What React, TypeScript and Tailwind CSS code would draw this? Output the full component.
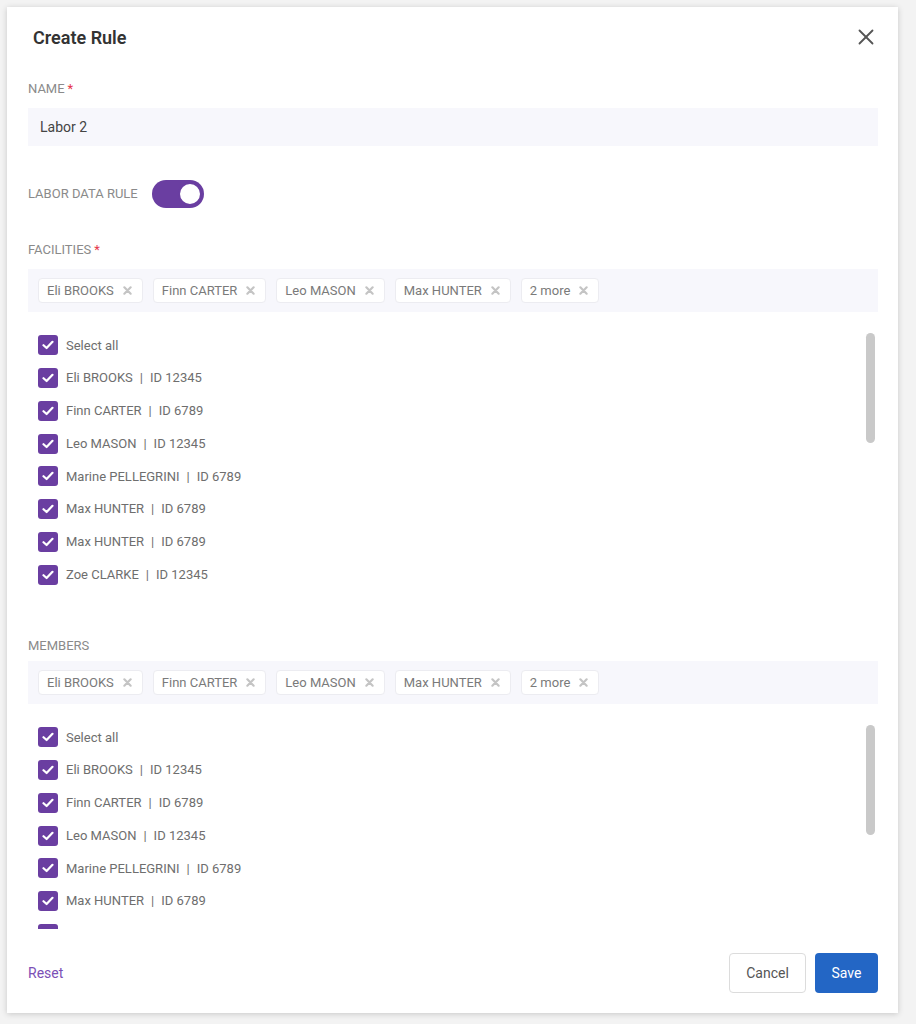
import { X } from "lucide-react";

const PURPLE = "bg-[#6a3ea1]";

const PEOPLE: { name: string; id: string }[] = [
  { name: "Eli BROOKS", id: "12345" },
  { name: "Finn CARTER", id: "6789" },
  { name: "Leo MASON", id: "12345" },
  { name: "Marine PELLEGRINI", id: "6789" },
  { name: "Max HUNTER", id: "6789" },
  { name: "Max HUNTER", id: "6789" },
  { name: "Zoe CLARKE", id: "12345" },
];

const CHIPS = ["Eli BROOKS", "Finn CARTER", "Leo MASON", "Max HUNTER", "2 more"];

function FieldLabel({ text, required }: { text: string; required?: boolean }) {
  return (
    <div className="h-4 flex items-center text-[13px] leading-4 text-[#8a8a8a] uppercase">
      {text}
      {required && <span className="ml-[3px] text-[#e5354a] text-[13px]">*</span>}
    </div>
  );
}

function ChipX() {
  return (
    <svg width="9" height="9" viewBox="0 0 10 10" className="shrink-0">
      <path d="M1.5 1.5 L8.5 8.5 M8.5 1.5 L1.5 8.5" stroke="#c4c4c4" strokeWidth="2.4" strokeLinecap="round" />
    </svg>
  );
}

function TagBox() {
  return (
    <div className="h-[43px] bg-[#f7f7fc] flex items-center gap-[10px] px-[10px]">
      {CHIPS.map((c) => (
        <span
          key={c}
          className="h-[25px] flex items-center gap-[9px] pl-[8px] pr-[10px] bg-white border border-[#ececf1] rounded-[4px] text-[13px] text-[#7a7a7a]"
        >
          {c}
          <ChipX />
        </span>
      ))}
    </div>
  );
}

function Checkbox() {
  return (
    <span className={`w-5 h-5 rounded-[3px] ${PURPLE} flex items-center justify-center shrink-0`}>
      <svg width="12" height="10" viewBox="0 0 12 10">
        <path d="M1.5 5.2 L4.6 8 L10.5 1.8" stroke="white" strokeWidth="2.2" fill="none" strokeLinecap="round" strokeLinejoin="round" />
      </svg>
    </span>
  );
}

function CheckList() {
  return (
    <div className="relative mt-[10px] pt-[7px] pb-[7px]">
      <div className="h-[32.75px] flex items-center gap-2 pl-[10px] text-[13px] text-[#6e6e6e]">
        <Checkbox />
        Select all
      </div>
      {PEOPLE.map((p, i) => (
        <div key={i} className="h-[32.75px] flex items-center gap-2 pl-[10px] text-[13px] text-[#6e6e6e]">
          <Checkbox />
          <span>
            {p.name}
            <span className="mx-[7px]">|</span>
            ID {p.id}
          </span>
        </div>
      ))}
      {/* scrollbar thumb */}
      <div className="absolute right-[3px] top-[11px] w-[9px] h-[110px] rounded-full bg-[#c9c9c9]" />
    </div>
  );
}

export default function App() {
  return (
    <div className="w-full h-[1024px] bg-[#f3f3f3] pt-[7px] pl-[7px]" style={{ fontFamily: "Roboto, 'Liberation Sans', sans-serif" }}>
      <div className="w-[891px] h-[1006px] bg-white shadow-[0_1px_6px_rgba(0,0,0,0.18)] flex flex-col pl-[21px] pr-[20px]">
        {/* Header */}
        <div className="h-[60px] flex items-center justify-between shrink-0">
          <h2 className="pl-[5px] text-[18px] font-semibold text-[#333]">Create Rule</h2>
          <X className="w-[26px] h-[26px] text-[#555] -mr-[1px]" strokeWidth={1.7} />
        </div>

        {/* Body */}
        <div className="h-[862px] overflow-hidden pt-[14px] shrink-0">
          <FieldLabel text="Name" required />
          <div className="mt-[11px] h-[38px] bg-[#f7f7fc] flex items-center px-3 text-[14px] text-[#444]">
            Labor 2
          </div>

          <div className="mt-[34px] h-7 flex items-center gap-[14px]">
            <FieldLabel text="Labor data rule" />
            <span className={`w-[52px] h-[28px] rounded-full ${PURPLE} flex items-center justify-end pr-[2px]`}>
              <span className="w-6 h-6 rounded-full bg-white border-[2px] border-[#6a3ea1]" />
            </span>
          </div>

          <div className="mt-[34px]">
            <FieldLabel text="Facilities" required />
          </div>
          <div className="mt-[11px]">
            <TagBox />
          </div>
          <CheckList />

          <div className="mt-[40px]">
            <FieldLabel text="Members" />
          </div>
          <div className="mt-[7px]">
            <TagBox />
          </div>
          <CheckList />
        </div>

        {/* Footer */}
        <div className="flex-1 flex items-start justify-between pt-[24px]">
          <button className="h-10 text-[14px] text-[#7b4fb6]">Reset</button>
          <div className="flex gap-[9px]">
            <button className="h-10 w-[77px] rounded-[4px] border border-[#dcdcdc] bg-white text-[14px] text-[#555]">
              Cancel
            </button>
            <button className="h-10 w-[63px] rounded-[4px] bg-[#2366c5] text-[14px] text-white">Save</button>
          </div>
        </div>
      </div>
    </div>
  );
}
